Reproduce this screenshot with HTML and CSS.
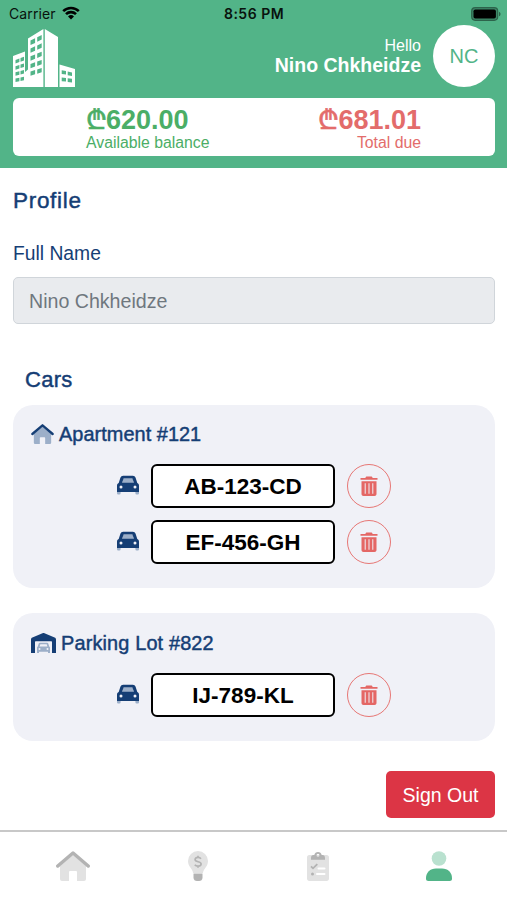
FILE: index.html
```html
<!DOCTYPE html>
<html lang="en">
<head>
<meta charset="utf-8">
<title>Profile</title>
<link rel="stylesheet" href="styles.css">
</head>
<body>
<svg class="defs" aria-hidden="true">
  <symbol id="car" viewBox="0 0 22 20">
    <path class="soft" d="M0 15h3.600v3.200a1.300 1.300 0 0 1-1.300 1.300h-1A1.300 1.300 0 0 1 0 18.200zM18.400 15H22v3.200a1.300 1.300 0 0 1-1.300 1.300h-1a1.300 1.300 0 0 1-1.300-1.300zM6.500 3h9l2 6h-13z"/>
    <path fill-rule="evenodd" d="M6.200.8h9.600c1.400 0 2.300.8 2.800 2L20.300 8c1.100.5 1.700 1.500 1.700 2.700V17H0v-6.300C0 9.500.6 8.500 1.700 8l1.700-5.200c.5-1.200 1.400-2 2.800-2zM6.700 3.300 5 7.700h12l-1.700-4.400zM4 10.500a1.500 1.500 0 1 0 0 3 1.500 1.500 0 0 0 0-3zm14 0a1.500 1.500 0 1 0 0 3 1.500 1.500 0 0 0 0-3z"/>
  </symbol>
  <symbol id="house" viewBox="0 0 34 30">
    <path class="soft" d="M4 15 17 4l13 11v13a2 2 0 0 1-2 2h-7v-9a1 1 0 0 0-1-1h-6a1 1 0 0 0-1 1v9H6a2 2 0 0 1-2-2z"/>
    <path class="roof" d="M1.800 15 17 2l15.200 13"/>
  </symbol>
  <symbol id="trash" viewBox="0 0 18 21">
    <path d="M.5 1.900h4.800L6 .8C6.200.5 6.500.4 7 .4h4c.5 0 .8.100 1 .4l.7 1.100h4.800v1.800H.5z"/>
    <path fill-rule="evenodd" d="M1.500 5.300h15V18c0 1.200-.8 2-2 2h-11c-1.200 0-2-.8-2-2zM4.700 7.300v10.500h1V7.300zm3.800 0v10.500h1V7.300zm3.800 0v10.500h1V7.300z"/>
  </symbol>
</svg>

<header class="header">
  <div class="status">
    <span class="carrier">Carrier
      <svg class="wifi" viewBox="0 0 18 14"><path d="M1.200 5.100a11.200 11.200 0 0 1 15.600 0M4 8.200a7.100 7.100 0 0 1 10 0"/><path class="dot" d="M9 13.600 6 10.500a4.300 4.300 0 0 1 6 0z"/></svg>
    </span>
    <span class="time">8:56 PM</span>
    <svg class="battery" viewBox="0 0 30 14"><rect class="shell" x=".7" y=".7" width="26" height="12.600" rx="3.500"/><rect x="2.500" y="2.500" width="22.400" height="9" rx="1.800"/><path class="tip" d="M28 4.700c2 .8 2 3.800 0 4.600z"/></svg>
  </div>
  <div class="identity">
    <svg class="logo" viewBox="0 0 62 58">
      <path class="tower" d="M0 27 12 22.500V43l3-2.500V9.500L30.400 0v58H0zM31.800 0 45 8v50H31.800zM46.500 35.500 62 40v18H46.500z"/>
      <path class="windows" d="m17.500 11.500 4.600-2.200v4.600l-4.600 2zm6.700-3.200 4.500-2.300v4.600l-4.500 2.100zM17.500 19.500l4.600-2.200v4.500l-4.600 2zm6.700-3 4.500-2.200v4.500l-4.500 1.900zM17.500 27.300l4.600-1.900v4.400l-4.600 1.900zm6.700-2.700 4.500-1.900v4.400l-4.500 1.800zM17.500 35l4.600-1.700v4.300l-4.600 1.700zm6.700-2.400 4.500-1.700v4.300l-4.500 1.700zM17.500 42.500l4.600-1.400v4.200l-4.600 1.500zm6.700-2.100 4.500-1.500v4.300l-4.500 1.500zM2.500 31l3.900-1.400v3.500l-3.900 1.300zm5-1.900 3.500-1.300v3.600l-3.500 1.300zm-5 8.100 3.900-1.100v3.500l-3.900 1.100zm5-1.600 3.500-1.100V38l-3.500 1.100zm-5 7.700 3.900-1v3.500l-3.900 1zm5-1.400 3.500-.9v3.500l-3.500.9zm-5 7.700 3.900-.8v3.500l-3.900.8zm5-1.100 3.500-.8v3.500l-3.500.8zM48.700 41.200l4.300.9v3.500l-4.300-.7zm6 1.300 4.300.9v3.500l-4.300-.7zm-6 6 4.300.5v3.600l-4.300-.4zm6 .8 4.300.5v3.600l-4.300-.4z"/>
    </svg>
    <div class="greeting"><span class="hello">Hello</span><strong class="name">Nino Chkheidze</strong></div>
    <div class="avatar">NC</div>
  </div>
  <div class="balances">
    <div class="balance"><span class="amount"><span class="lari">₾</span>620.00</span><span class="caption">Available balance</span></div>
    <div class="balance due"><span class="amount"><span class="lari">₾</span>681.01</span><span class="caption">Total due</span></div>
  </div>
</header>

<main class="content">
  <h1 class="title">Profile</h1>
  <label class="label" for="full-name">Full Name</label>
  <input class="field" id="full-name" value="Nino Chkheidze" disabled>
  <h2 class="subtitle">Cars</h2>

  <section class="card">
    <h3 class="place"><svg class="place-house"><use href="#house"/></svg>Apartment #121</h3>
    <div class="car-row"><svg class="car"><use href="#car"/></svg><span class="plate">AB-123-CD</span><button class="remove" aria-label="Remove"><svg><use href="#trash"/></svg></button></div>
    <div class="car-row"><svg class="car"><use href="#car"/></svg><span class="plate">EF-456-GH</span><button class="remove" aria-label="Remove"><svg><use href="#trash"/></svg></button></div>
  </section>

  <section class="card parking">
    <h3 class="place"><svg class="place-garage" viewBox="0 0 25 20"><path d="M0 20V6.500c0-1 .5-1.700 1.400-2.100L11.500.3c.7-.3 1.300-.3 2 0l10.100 4.100c.9.400 1.400 1.100 1.400 2.100V20h-4V9.200c0-.7-.3-1-1-1H5c-.7 0-1 .3-1 1V20z"/><path class="soft" fill-rule="evenodd" d="M9 9.700h7c.7 0 1.100.3 1.300.9l.9 2.800c.6.300.8.8.8 1.400V20h-2v-1.300H8V20H6v-5.200c0-.6.200-1.100.8-1.400l.9-2.800c.2-.6.600-.9 1.300-.9zm.3 1.500-.7 2.200h7.800l-.7-2.200zM8.500 15a1 1 0 1 0 0 2 1 1 0 0 0 0-2zm8 0a1 1 0 1 0 0 2 1 1 0 0 0 0-2z"/></svg>Parking Lot #822</h3>
    <div class="car-row"><svg class="car"><use href="#car"/></svg><span class="plate">IJ-789-KL</span><button class="remove" aria-label="Remove"><svg><use href="#trash"/></svg></button></div>
  </section>

  <button class="sign-out">Sign Out</button>
</main>

<nav class="tabs">
  <a class="tab"><svg class="tab-house"><use href="#house"/></svg></a>
  <a class="tab"><svg class="tab-bulb" viewBox="0 0 20 30"><path class="pale" d="M10 0a10 10 0 0 1 10 10c0 3-1.300 5-2.700 7-1.200 1.700-2.300 3.200-2.300 5H5c0-1.800-1.100-3.300-2.300-5C1.300 15 0 13 0 10A10 10 0 0 1 10 0z"/><path d="M5.500 22.500h9v4.200c0 2-1.500 3.300-3.500 3.300H9c-2 0-3.500-1.300-3.500-3.300z"/><path class="dollar" d="M13 7.700C12.300 6.800 11.300 6.400 10 6.400c-1.800 0-2.900.8-2.900 2.100 0 3.200 6 1.400 6 4.500 0 1.400-1.300 2.200-3.100 2.200-1.400 0-2.500-.4-3.200-1.400M10 4.800v1.600m0 8.800v1.600"/></svg></a>
  <a class="tab"><svg class="tab-list" viewBox="0 0 22 30"><path class="pale" d="M2.200 4h17.600c1.200 0 2.200 1 2.200 2.200v21.600c0 1.200-1 2.200-2.200 2.200H2.200C1 30 0 29 0 27.800V6.200C0 5 1 4 2.200 4z"/><path fill-rule="evenodd" d="M4 8.700V6.900C4 5.200 5 4 6.500 4h.8a3.800 3.800 0 0 1 7.400 0h.8C17 4 18 5.200 18 6.900v1.800zM11 2.700a1.500 1.500 0 1 0 0 3 1.500 1.500 0 0 0 0-3z"/><path class="lines" d="M11.500 17.500h6M10 23h7.500"/><path class="check" d="m4 15.300 2 2 4.300-4.200"/><circle cx="5.500" cy="23" r="1.500"/></svg></a>
  <a class="tab active"><svg class="tab-user" viewBox="0 0 26 30"><circle class="pale" cx="13" cy="7.500" r="7.300"/><path d="M10 17.500h6c6 0 10 4.200 10 9.500v1c0 1.200-1 2-2.200 2H2.200C1 30 0 29.200 0 28v-1c0-5.300 4-9.500 10-9.500z"/></svg></a>
</nav>
</body>
</html>
```

FILE: styles.css
```css
* { box-sizing: border-box; }

body {
  --icon-main: #153e75;
  --icon-soft: #9cafc9;
  margin: 0;
  width: 507px;
  height: 900px;
  display: flex;
  flex-direction: column;
  overflow: hidden;
  background: #fff;
  color: #153e75;
  font-family: "Liberation Sans", Arial, sans-serif;
}

svg { display: block; flex: none; }
button { font: inherit; padding: 0; }
.defs { width: 0; height: 0; position: absolute; }

.header {
  height: 168px;
  padding: 0 12px 0 13px;
  background: #52b488;
}

.status {
  height: 25px;
  padding-top: 3px;
  margin: 0 -6px 0 -4px;
  display: grid;
  grid-template-columns: 1fr auto 1fr;
  align-items: center;
  color: #08120d;
  font: 400 14px/20px Inter, sans-serif;
}
.carrier { display: flex; gap: 6px; letter-spacing: .1px; }
.wifi { width: 18px; height: 14px; margin-top: 2px; }
.wifi path { fill: none; stroke: #000; stroke-width: 2.6; }
.wifi .dot { fill: #000; stroke: none; }
.time { margin-right: 2px; font-weight: 600; letter-spacing: .5px; }
.battery { width: 30px; height: 14px; justify-self: end; margin-top: -1px; }
.battery .shell { fill: #3d8767; stroke: #2d634b; stroke-width: 1.2; }
.battery .tip { fill: #2d634b; }

.identity { height: 62px; display: flex; align-items: flex-start; }
.logo { width: 62px; height: 58px; margin-top: 4px; }
.logo .tower { fill: #fff; }
.logo .windows { fill: #52b488; }
.greeting {
  margin: 12px 12px 0 auto;
  display: flex;
  flex-direction: column;
  text-align: right;
  color: #fff;
}
.hello { font-size: 16px; line-height: 18px; }
.name { font-size: 19.5px; line-height: 21px; }
.avatar {
  width: 62px;
  height: 62px;
  border-radius: 50%;
  background: #fff;
  color: #52b488;
  font-size: 20px;
  line-height: 62px;
  text-align: center;
}

.balances {
  height: 58px;
  margin-top: 11px;
  padding: 9px 74px 0 73px;
  display: flex;
  justify-content: space-between;
  border-radius: 6px;
  background: #fff;
}
.balance { display: flex; flex-direction: column; color: #4bae66; }
.balance.due { align-items: flex-end; color: #e36c6b; }
.amount { height: 26px; font-size: 27px; line-height: 26px; font-weight: 700; }
.lari {
  display: inline-block;
  width: 20px;
  font-size: 27px;
  line-height: 20px;
  font-weight: 400;
  -webkit-text-stroke: .6px currentColor;
}
.caption { margin-top: 1px; font-size: 15.8px; line-height: 17px; }

.content {
  flex: 1;
  padding: 0 12px 0 13px;
  display: flex;
  flex-direction: column;
}
.title, .subtitle, .place {
  margin: 0;
  font-weight: 400;
  -webkit-text-stroke: .45px currentColor;
}
.title { margin-top: 19px; font-size: 22.5px; line-height: 28px; letter-spacing: .7px; }
.label { margin-top: 27px; font-size: 19.3px; line-height: 24px; }
.field {
  height: 47px;
  margin-top: 11px;
  padding: 1px 15px 0;
  border: 1px solid #d0d5da;
  border-radius: 5px;
  background: #e9ebee;
  color: #6f777e;
  font: 19.6px "Liberation Sans", Arial, sans-serif;
}
.subtitle { margin: 42px 0 0 12px; font-size: 22px; line-height: 28px; letter-spacing: .3px; }

.card {
  margin-top: 25px;
  padding: 17px 18px 24px;
  border-radius: 20px;
  background: #f0f1f7;
}
.subtitle + .card { margin-top: 11px; }
.card.parking { padding-top: 18px; }
.place { height: 24px; display: flex; align-items: center; font-size: 19.9px; line-height: 24px; letter-spacing: .05px; }
.parking .place { letter-spacing: .15px; }
.place svg { fill: var(--icon-main); stroke: none; }
.soft { fill: var(--icon-soft); }
.roof { fill: none; stroke: var(--icon-main); stroke-width: 3.5; stroke-linecap: round; stroke-linejoin: round; }
.place-house { width: 23px; height: 20px; margin: -1px 5px 0 0; }
.place-garage { width: 25px; height: 20px; margin-right: 5px; }
.car-row { margin-top: 12px; display: flex; justify-content: center; align-items: center; }
.place + .car-row { margin-top: 18px; }
.car { width: 22px; height: 20px; margin: -2px 12px 0 0; fill: var(--icon-main); }
.plate {
  width: 184px;
  height: 44px;
  border: 2.5px solid #000;
  border-radius: 6px;
  background: #fff;
  color: #000;
  font-size: 22.5px;
  line-height: 41px;
  font-weight: 700;
  text-align: center;
}
.remove {
  width: 44px;
  height: 44px;
  margin-left: 12px;
  display: grid;
  place-items: center;
  border: 1.4px solid #e77775;
  border-radius: 50%;
  background: none;
}
.remove svg { width: 18px; height: 21px; fill: #e46765; }

.sign-out {
  width: 109px;
  height: 47px;
  margin: 30px 0 0;
  padding-top: 1px;
  align-self: flex-end;
  border: 0;
  border-radius: 5px;
  background: #dc3545;
  color: #fff;
  font-size: 19.5px;
}

.tabs {
  --icon-main: #b3b3b3;
  --icon-soft: #e2e2e2;
  height: 70px;
  padding: 19px 2px 0 12px;
  display: grid;
  grid-template-columns: 121px 129px 111px 1fr;
  border-top: 2px solid #c8c8c8;
}
.tab { display: flex; justify-content: center; align-items: flex-start; fill: var(--icon-main); }
.tab .pale { fill: var(--icon-soft); }
.tab-house { width: 34px; height: 30px; }
.tab-bulb { width: 20px; height: 30px; }
.tab-list { width: 22px; height: 30px; }
.tab-user { width: 26px; height: 30px; }
.dollar { fill: none; stroke: var(--icon-main); stroke-width: 1.7; }
.lines { fill: none; stroke: #fff; stroke-width: 2; stroke-linecap: round; }
.check { fill: none; stroke: var(--icon-main); stroke-width: 1.8; }
.active { --icon-main: #52b488; --icon-soft: #b9e1cf; }
```
